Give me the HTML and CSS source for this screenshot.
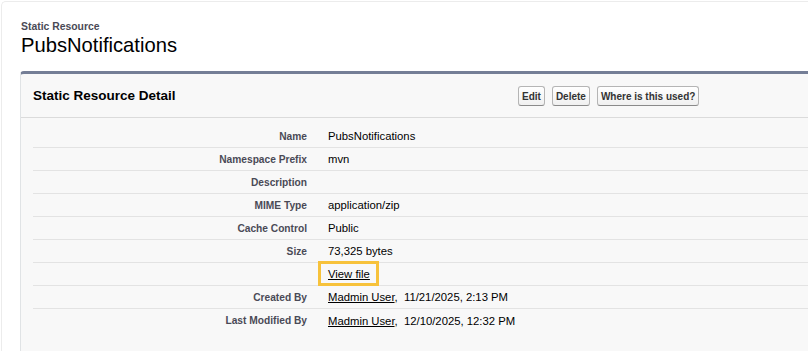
FILE: index.html
```html
<!DOCTYPE html>
<html>
<head>
<meta charset="utf-8">
<link rel="stylesheet" href="styles.css">
</head>
<body>
<div class="frame">
  <div class="page-head">
    <div class="crumb">Static Resource</div>
    <h1 class="title">PubsNotifications</h1>
  </div>
  <div class="panel">
    <div class="panel-head">
      <h2 class="panel-title">Static Resource Detail</h2>
      <div class="btns">
        <button class="btn">Edit</button>
        <button class="btn">Delete</button>
        <button class="btn">Where is this used?</button>
      </div>
    </div>
    <div class="detail">
      <div class="row"><div class="lbl">Name</div><div class="val">PubsNotifications</div></div>
      <div class="row"><div class="lbl">Namespace Prefix</div><div class="val">mvn</div></div>
      <div class="row"><div class="lbl">Description</div><div class="val"></div></div>
      <div class="row"><div class="lbl">MIME Type</div><div class="val">application/zip</div></div>
      <div class="row"><div class="lbl">Cache Control</div><div class="val">Public</div></div>
      <div class="row"><div class="lbl">Size</div><div class="val">73,325 bytes</div></div>
      <div class="row"><div class="lbl"></div><div class="val"><a class="link hl" href="#">View file</a></div></div>
      <div class="row"><div class="lbl">Created By</div><div class="val"><a class="link" href="#">Madmin User</a>,&nbsp; 11/21/2025, 2:13 PM</div></div>
      <div class="row last"><div class="lbl">Last Modified By</div><div class="val"><a class="link" href="#">Madmin User</a>,&nbsp; 12/10/2025, 12:32 PM</div></div>
    </div>
  </div>
</div>
</body>
</html>
```
FILE: styles.css
```css
* { box-sizing: border-box; }
html, body { margin: 0; padding: 0; background: #fff; overflow: hidden; }
body {
  font-family: "Liberation Sans", Arial, Helvetica, sans-serif;
  color: #000;
  width: 808px;
  height: 351px;
}
.frame {
  margin: 1px 0 0 1px;
  width: 807px;
  height: 350px;
  border-top: 1px solid #ececec;
  border-left: 1px solid #ececec;
  border-top-left-radius: 5px;
  padding: 17px 0 0 18px;
}
.page-head { padding-left: 1px; }
.crumb {
  font-size: 10.4px;
  font-weight: bold;
  color: #4a4a56;
  line-height: 14px;
  padding-top: 1px;
}
.title {
  margin: 0;
  font-size: 20.2px;
  font-weight: normal;
  line-height: 23px;
  color: #000;
}
.panel {
  margin-top: 14px;
  height: 281px;
  background: #f8f8f8;
  border-top: 3px solid #747e96;
  border-left: 1px solid #e0e3e5;
  border-radius: 4px 0 0 0;
}
.panel-head {
  display: flex;
  align-items: center;
  height: 44px;
  border-bottom: 1px solid #dbdbdb;
  padding-left: 12px;
}
.panel-title {
  margin: 0;
  width: 485px;
  font-size: 13.5px;
  font-weight: bold;
  color: #000;
}
.btns { display: flex; gap: 7px; padding-top: 1px; }
.btn {
  font-family: "Liberation Sans", Arial, Helvetica, sans-serif;
  font-size: 10px;
  font-weight: bold;
  color: #333;
  height: 20px;
  padding: 0 3px;
  border: 1px solid #b5b5b5;
  border-bottom-color: #8a8a8a;
  border-radius: 3px;
  background: linear-gradient(#ffffff, #f0f0f0);
}
.detail { padding: 7px 0 0 12px; }
.row {
  display: flex;
  height: 23px;
  align-items: center;
  border-bottom: 1px solid #e3e3e3;
  font-size: 11.3px;
}
.row.last { border-bottom: none; }
.lbl {
  width: 285px;
  padding-right: 11px;
  text-align: right;
  font-size: 10.2px;
  font-weight: bold;
  color: #4a4a56;
}
.val { padding-left: 10px; color: #000; }
.link { color: #000; text-decoration: underline; }
.hl { position: relative; }
.hl::after {
  content: "";
  position: absolute;
  left: -10px;
  right: -9px;
  top: -7px;
  bottom: -6px;
  border: 3px solid #f7c23b;
}
```
